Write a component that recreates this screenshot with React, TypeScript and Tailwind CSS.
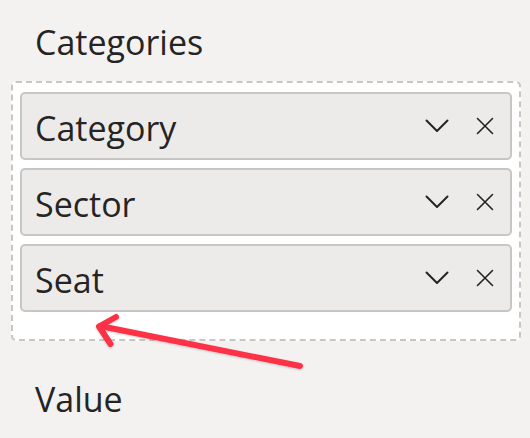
import React from "react";

const Chevron = () => (
  <svg width="24" height="14" viewBox="0 0 24 14" className="block">
    <path d="M1.5 1.5 L12 12 L22.5 1.5" fill="none" stroke="#252423" strokeWidth="2" strokeLinecap="round" strokeLinejoin="round" />
  </svg>
);

const Close = () => (
  <svg width="18" height="18" viewBox="0 0 18 18" className="block">
    <path d="M1.5 1.5 L16.5 16.5 M16.5 1.5 L1.5 16.5" fill="none" stroke="#252423" strokeWidth="1.6" strokeLinecap="round" />
  </svg>
);

const Field = ({ name }: { name: string }) => (
  <div className="flex h-[68px] items-center rounded-[5px] border-2 border-[#c8c6c4] bg-[#edebe9] pl-[13px] pr-[16px]">
    <span className="flex-1 text-[34px] leading-[34px] pt-[4px] text-[#252423]">{name}</span>
    <Chevron />
    <div className="w-[27px]" />
    <Close />
  </div>
);

export default function App() {
  return (
    <div
      className="relative h-[438px] w-[530px] overflow-hidden bg-[#f3f2f1]"
      style={{ fontFamily: '"Open Sans", "Noto Sans", sans-serif' }}
    >
      <div className="pl-[35px] pt-[25px] text-[34px] leading-[34px] text-[#252423]">Categories</div>
      <div className="ml-[11px] mt-[22px] flex h-[260px] w-[510px] flex-col gap-[8px] rounded-[5px] border-2 border-dashed border-[#c8c6c4] bg-white px-[7px] pt-[9px]">
        <Field name="Category" />
        <Field name="Sector" />
        <Field name="Seat" />
      </div>
      <div className="pl-[35px] pt-[41px] text-[34px] leading-[34px] text-[#252423]">Value</div>
      <svg className="pointer-events-none absolute left-0 top-0" width="530" height="438" viewBox="0 0 530 438">
        <defs>
          <filter id="sh" x="-10%" y="-10%" width="120%" height="120%">
            <feDropShadow dx="0" dy="1" stdDeviation="1.2" floodColor="#000" floodOpacity="0.18" />
          </filter>
        </defs>
        <g filter="url(#sh)" fill="none" stroke="#fe3246" strokeWidth="6" strokeLinecap="round" strokeLinejoin="round">
          <path d="M300 366 L100 326" />
          <path d="M116 317 L99 326.5 L110.5 344" />
        </g>
      </svg>
    </div>
  );
}
